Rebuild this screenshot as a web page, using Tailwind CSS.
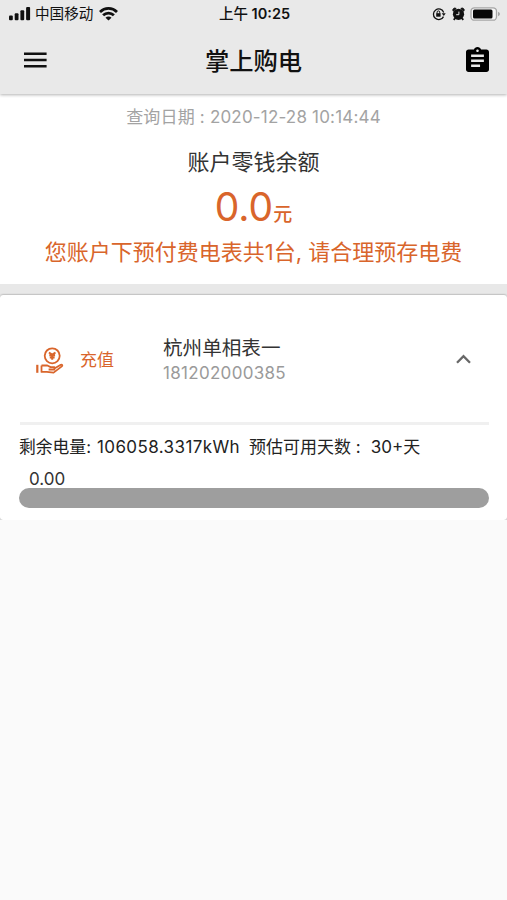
<!DOCTYPE html>
<html lang="zh-CN">
<head>
  <meta charset="utf-8" />
  <title>掌上购电</title>
  <meta name="viewport" content="width=device-width, initial-scale=1" />
  <script src="https://cdn.jsdelivr.net/npm/@tailwindcss/browser@4"></script>
</head>
<body class="bg-[#fafafa] text-[#333] font-['Inter','Noto_Sans_CJK_SC',sans-serif] whitespace-nowrap overflow-hidden h-[900px]">

  <!-- header -->
  <header class="relative z-10 h-[94px] bg-[#e9e9e9] text-[#111] shadow-[0_1px_3px_rgba(0,0,0,0.3)]">
    <div class="h-7 grid grid-cols-3 items-center pl-[9px] pr-[7px]">
      <div class="flex items-center">
        <svg class="w-[22px] h-[14px]" viewBox="0 0 22 14" fill="currentColor">
          <rect x="0" y="8.5" width="3.8" height="4.8" rx="1" />
          <rect x="5.7" y="6.3" width="3.8" height="7" rx="1" />
          <rect x="11.4" y="3.3" width="3.8" height="10" rx="1" />
          <rect x="17.1" y="0" width="4" height="13.3" rx="1" />
        </svg>
        <span class="ml-[4px] text-[14.6px] leading-7">中国移动</span>
        <svg class="ml-[6px] w-[19px] h-[14px]" viewBox="0 0 19 14" fill="none" stroke="currentColor" stroke-width="2.8">
          <path d="M1 4.9a12.2 12.2 0 0 1 17 0" />
          <path d="M4.1 8.3a7.8 7.8 0 0 1 10.8 0" />
          <path d="M9.5 13.6 6.5 10.7a4.2 4.2 0 0 1 6 0z" fill="currentColor" stroke="none" />
        </svg>
      </div>
      <div class="text-center text-[14.5px] leading-7 font-semibold"><span class="font-medium">上午</span> 10:25</div>
      <div class="flex items-center justify-end">
        <svg class="w-[14px] h-[14px]" viewBox="0 0 14 14" fill="none" stroke="currentColor" stroke-width="1.3">
          <path d="M11.5 9.6A5.3 5.3 0 1 1 11.7 5.4" />
          <path d="M9.7 6.2h4L11.8 9z" fill="currentColor" stroke="none" />
          <rect x="4.2" y="6.2" width="4.4" height="3.5" fill="currentColor" stroke="none" />
          <path d="M5.1 6.5V5.2a1.3 1.3 0 0 1 2.6 0v1.3" stroke-width="1" />
        </svg>
        <svg class="ml-[6px] w-[13px] h-[14px]" viewBox="0 0 13 14">
          <circle cx="6.5" cy="7.3" r="5.6" fill="currentColor" />
          <path d="M1.2 4.2a2 2 0 0 1 3-2.600zM11.8 4.2a2 2 0 0 0-3-2.600z" fill="currentColor" stroke="currentColor" />
          <path d="m3 11.3-1.3 1.5M10 11.3l1.3 1.5" stroke="currentColor" stroke-width="1.8" />
          <path d="M6.9 4.6v3.1H4.2" fill="none" stroke="#e9e9e9" stroke-width="1" />
        </svg>
        <svg class="ml-[5px] w-[30px] h-[14px]" viewBox="0 0 30 14">
          <rect x="1" y=".8" width="25.5" height="12.4" rx="3.5" fill="#f5f5f5" stroke="#a5a5a5" stroke-width="1.3" />
          <rect x="3" y="2.6" width="19.5" height="8.8" rx="1.5" fill="#080808" />
          <path d="M28 4.8v4.4q2-.8 2-2.2t-2-2.200z" fill="#a5a5a5" />
        </svg>
      </div>
    </div>
    <div class="h-[63px] grid grid-cols-[1fr_auto_1fr] items-center pl-6 pr-[18px]">
      <svg class="w-[23px] h-4" viewBox="0 0 23 16" fill="currentColor">
        <path d="M0 .4h22.600V3H0zM0 6.700h22.600v2.600H0zM0 13h22.600v2.600H0z" />
      </svg>
      <h1 class="ml-[-6px] pt-[3px] text-[24.3px] font-medium">掌上购电</h1>
      <svg class="justify-self-end w-[23px] h-[25px]" viewBox="3 1 18 20" preserveAspectRatio="none" fill="#000">
        <path d="M19 3h-4.180C14.400 1.840 13.300 1 12 1c-1.300 0-2.400.84-2.820 2H5c-1.100 0-2 .9-2 2v14c0 1.100.9 2 2 2h14c1.100 0 2-.9 2-2V5c0-1.100-.9-2-2-2zm-7 0c.55 0 1 .45 1 1s-.45 1-1 1-1-.45-1-1 .45-1 1-1zm2 14H7v-2h7v2zm3-4H7v-2h10v2zm0-4H7V7h10v2z" />
      </svg>
    </div>
  </header>

  <!-- balance -->
  <section class="h-[190px] bg-white text-center flex flex-col items-center">
    <p class="mt-[11px] h-6 leading-6 text-[17px] tracking-[0.18px] text-[#a3a3a3]">查询日期 : 2020-12-28 10:14:44</p>
    <h2 class="mt-[18px] h-[30px] leading-[30px] text-[22px]">账户零钱余额</h2>
    <p class="mt-[6px] h-12 leading-[48px] text-[#d9652b]"><span class="text-[39px]">0.0</span><span class="text-[19px] font-medium">元</span></p>
    <p class="mt-[4px] h-[34px] leading-[34px] text-[22px] text-[#d9652b]">您账户下预付费电表共1台, 请合理预存电费</p>
  </section>
  <div class="h-[11px] bg-[#e8e8e8]"></div>

  <!-- meter card -->
  <section class="h-[225px] bg-white rounded-[3px] pl-[19px] pr-[18px] shadow-[0_0_2px_rgba(0,0,0,0.55)] [clip-path:inset(-3px_0_0_0)]">
    <div class="h-[127px] flex items-center">
      <svg class="ml-[17px] mt-1 w-[28px] h-[28px]" viewBox="0 0 28 28" fill="none" stroke="#d9652b" stroke-width="1.8" stroke-linejoin="round">
        <circle cx="16.2" cy="8.8" r="7.5" />
        <path d="m12.9 5.5 3.3 2.1 3.3-2.1M13.3 8.3h5.8M13.8 10.5h4.8M16.2 7.5v5.3" stroke-width="2" />
        <path d="M1.3 17.8v8" stroke-width="2.2" />
        <path d="M5.5 18.500h5.800l3.300 1.600h3.800v2.400h-5.800M18.400 21.500l6.400-3.700c1.500-.3 2 .8 1 1.600l-8.200 6.200-6.800-.7H5.500v-6.400" />
      </svg>
      <span class="ml-[16px] mt-1 text-[17px] text-[#d9652b]">充值</span>
      <div class="ml-[49px] pt-[3px]">
        <div class="text-[19.6px] leading-[26px]">杭州单相表一</div>
        <div class="text-[17px] leading-6 tracking-[0.3px] text-[#9a9a9a]">181202000385</div>
      </div>
      <svg class="ml-auto mr-[18px] w-[15px] h-[10px]" viewBox="0 0 15 10" fill="none" stroke="#686868" stroke-width="2.3">
        <path d="m1 8.700 6.500-6.500L14 8.700" />
      </svg>
    </div>
    <div class="ml-px h-[3px] bg-[#f0f0f0]"></div>
    <div class="mt-[10px] h-6 leading-6 text-[16.8px] flex text-[#222]">
      <span>剩余电量:</span>
      <span class="ml-[6px] text-[17px] tracking-[0.4px]">106058.3317kWh</span>
      <span class="ml-[9px] text-[17px]">预估可用天数 :</span>
      <span class="ml-[10px] text-[17px]">30+天</span>
    </div>
    <div class="mt-[11px] ml-[10px] h-[18px] leading-[18px] text-[17px]">0.00</div>
    <div class="w-[470px] h-5 rounded-full bg-[#9e9e9e]"></div>
  </section>

</body>
</html>
